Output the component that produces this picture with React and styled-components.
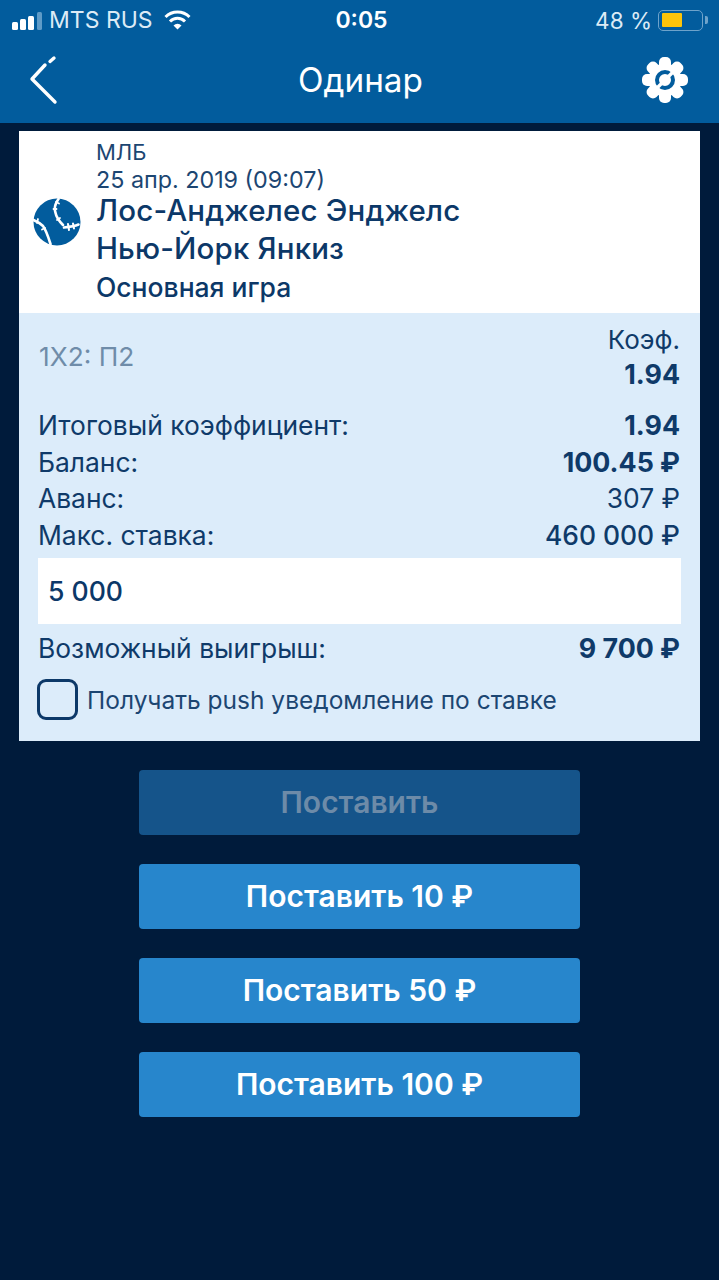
import React from 'react';
import styled, { createGlobalStyle } from 'styled-components';

const GlobalStyle = createGlobalStyle`
  html, body { margin: 0; padding: 0; background: #001b3b; }
  body { font-family: Inter, "Noto Sans", sans-serif; }
`;

const Screen = styled.div`
  width: 719px;
  height: 1280px;
  overflow: hidden;
  background: #001b3b;
`;

const Header = styled.header`
  height: 123px;
  background: #025c9d;
  color: #fff;
`;

const StatusBar = styled.div`
  height: 40px;
  display: grid;
  grid-template-columns: 1fr auto 1fr;
  align-items: center;
  padding: 0 16px 0 12px;
  font-size: 23px;
  color: #dcebf6;
`;

const StatusLeft = styled.div`
  display: flex;
  align-items: center;
  gap: 7px;
`;

const StatusRight = styled.div`
  display: flex;
  align-items: center;
  justify-content: flex-end;
  gap: 6px;
  font-size: 22.5px;
`;

const Clock = styled.div`
  font-weight: 600;
  color: #fff;
  margin-left: 8px;
`;

const Signal = styled.div`
  display: flex;
  align-items: flex-end;
  gap: 2.7px;
  height: 20px;
`;

const SignalBar = styled.span`
  width: 5.5px;
  height: ${p => p.$h}px;
  border-radius: 1.5px;
  background: ${p => (p.$off ? '#5f9bc7' : '#fff')};
`;

const WifiWrap = styled.div`
  display: flex;
  margin-left: 4px;
`;

const Battery = styled.div`
  width: 45px;
  height: 21px;
  box-sizing: border-box;
  border: 1.5px solid #6ea3cb;
  border-radius: 5px;
  padding: 2.5px;
  position: relative;
  &::after {
    content: '';
    position: absolute;
    right: -6px;
    top: 5px;
    width: 3px;
    height: 8px;
    border-radius: 0 2px 2px 0;
    background: #6ea3cb;
  }
`;

const BatteryFill = styled.div`
  width: 20px;
  height: 100%;
  background: #fcc40a;
  border-radius: 1px;
`;

const NavBar = styled.div`
  height: 83px;
  display: flex;
  align-items: center;
  justify-content: space-between;
  padding: 0 30px 3px 28px;
  box-sizing: border-box;
`;

const NavTitle = styled.h1`
  margin: 2px 0 0 4px;
  font-size: 33.3px;
  font-weight: 400;
  line-height: 1;
`;

const IconButton = styled.div`
  display: flex;
  width: 48px;
  justify-content: ${p => (p.$end ? 'flex-end' : 'flex-start')};
`;

const Card = styled.section`
  margin: 8px 19px 0;
  width: 681px;
`;

const EventBlock = styled.div`
  background: #fff;
  height: 182px;
  box-sizing: border-box;
  padding: 7px 0 0 14px;
  display: flex;
  color: #0d3a6b;
`;

const LeagueIcon = styled.div`
  width: 48px;
  margin: 60px 15px 0 0;
`;

const EventInfo = styled.div`
  display: flex;
  flex-direction: column;
`;

const Small = styled.div`
  font-size: ${p => p.$size || 22}px;
  line-height: 28px;
  color: #1c4672;
`;

const Team = styled.div`
  font-size: 29.5px;
  font-weight: 500;
  line-height: 38px;
  letter-spacing: 0.15px;
  color: #0c3868;
  margin-top: ${p => p.$offset || 0}px;
`;

const GameType = styled.div`
  font-size: 26.5px;
  font-weight: 500;
  line-height: 30px;
  margin-top: 5px;
  color: #0c3868;
`;

const BetBlock = styled.div`
  background: #dcecfa;
  height: 428px;
  box-sizing: border-box;
  padding: 9px 20px 0 19px;
  color: #0f3a69;
`;

const OddsRow = styled.div`
  display: flex;
  justify-content: space-between;
  height: 85px;
`;

const Market = styled.div`
  font-size: 26.3px;
  color: #6f8ca9;
  margin: 20px 0 0 1px;
  line-height: 30px;
`;

const Odds = styled.div`
  text-align: right;
  font-size: 26px;
  line-height: 35px;
`;

const Row = styled.div`
  display: flex;
  justify-content: space-between;
  font-size: 26.4px;
  height: 36.5px;
  line-height: 36.5px;
`;

const Strong = styled.strong`
  font-weight: 700;
  font-size: 26.8px;
`;

const Amount = styled.span`
  font-size: 26.4px;
  font-weight: ${p => p.$w || 400};
`;

const StakeInput = styled.div`
  margin: 5px -1px 6px 0;
  height: 66px;
  background: #fff;
  display: flex;
  align-items: center;
  padding-left: 10px;
  font-size: 26.6px;
  font-weight: 500;
  color: #0c3868;
`;

const PushRow = styled.div`
  display: flex;
  align-items: center;
  gap: 9px;
  margin-top: 12px;
  font-size: 24.5px;
  color: #1c4672;
`;

const PushLabel = styled.span`
  margin-top: 2px;
`;

const Checkbox = styled.div`
  width: 41px;
  height: 41px;
  box-sizing: border-box;
  margin-left: -1px;
  border: 3px solid #0c3868;
  border-radius: 9px;
`;

const Actions = styled.div`
  display: flex;
  flex-direction: column;
  align-items: center;
  gap: 29px;
  margin-top: 29px;
`;

const BetButton = styled.button`
  width: 441px;
  height: 65px;
  border: 0;
  border-radius: 4px;
  padding: 0 0 1px;
  font: 600 30px Inter, "Noto Sans", sans-serif;
  background: ${p => (p.disabled ? '#15548a' : '#2786cc')};
  color: ${p => (p.disabled ? '#6d8ba8' : '#fff')};
`;

const BackIcon = () => (
  <svg width="30" height="50" viewBox="0 0 30 50" fill="none" stroke="#fff" strokeWidth="3.4" strokeLinecap="round" strokeLinejoin="round">
    <path d="M17 10 L4 24 L27 47" />
    <path d="M22 6.5 L26 3" />
  </svg>
);

const lobes = [0, 45, 90, 135, 180, 225, 270, 315];

const GearIcon = () => (
  <svg width="48" height="48" viewBox="0 0 48 48">
    <circle cx="24" cy="24" r="16.5" fill="#fff" />
    {lobes.map(a => (
      <rect key={a} x="18" y="1" width="12" height="13" rx="5" fill="#fff" transform={`rotate(${a} 24 24)`} />
    ))}
    <circle cx="24" cy="24" r="8" fill="none" stroke="#025c9d" strokeWidth="4" />
    <path d="M15 33 L33 15" stroke="#fff" strokeWidth="3.4" />
  </svg>
);

const WifiIcon = () => (
  <svg width="27" height="20" viewBox="0 0 27 20" fill="none" stroke="#fff" strokeWidth="3">
    <path d="M1.5 7a17 17 0 0 1 24 0" />
    <path d="M6 11.5a10.500 10.500 0 0 1 15 0" />
    <path d="M13.500 19.500l-4-4a5.600 5.600 0 0 1 8 0z" fill="#fff" stroke="none" />
  </svg>
);

const BaseballIcon = () => (
  <svg width="48" height="48" viewBox="0 0 48 48">
    <circle cx="24" cy="24" r="23.5" fill="#025c9d" />
    <g fill="none" stroke="#fff" strokeWidth="2.6" strokeLinecap="round">
      <path d="M25.500 1 C22 6 21 10 22.300 14 C23 18 25 22 30 27" />
      <path d="M23 4l3 1.500 M20.500 11l3 0 M24 22l3-2" strokeWidth="1.8" />
      <path d="M0.500 22 C5 24 8 26 10 28 C13 32 15 38 17.500 46" />
      <path d="M5 21l-1 4 M12 30l-3 1.500" strokeWidth="1.8" />
      <path d="M31 29.500 C36 29 41 28.500 45.500 26.500" />
      <path d="M35 26l1 6 M40 25.500l1 5" strokeWidth="2" />
    </g>
  </svg>
);

export default function App() {
  return (
    <Screen>
      <GlobalStyle />
      <Header>
        <StatusBar>
          <StatusLeft>
            <Signal>
              <SignalBar $h={8} />
              <SignalBar $h={11} />
              <SignalBar $h={14} />
              <SignalBar $h={18} $off />
            </Signal>
            <span>MTS RUS</span>
            <WifiWrap><WifiIcon /></WifiWrap>
          </StatusLeft>
          <Clock>0:05</Clock>
          <StatusRight>
            <span>48 %</span>
            <Battery>
              <BatteryFill />
            </Battery>
          </StatusRight>
        </StatusBar>
        <NavBar>
          <IconButton><BackIcon /></IconButton>
          <NavTitle>Одинар</NavTitle>
          <IconButton $end><GearIcon /></IconButton>
        </NavBar>
      </Header>
      <Card>
        <EventBlock>
          <LeagueIcon><BaseballIcon /></LeagueIcon>
          <EventInfo>
            <Small>МЛБ</Small>
            <Small $size={23.3}>25 апр. 2019 (09:07)</Small>
            <Team $offset={-3}>Лос-Анджелес Энджелс</Team>
            <Team>Нью-Йорк Янкиз</Team>
            <GameType>Основная игра</GameType>
          </EventInfo>
        </EventBlock>
        <BetBlock>
          <OddsRow>
            <Market>1Х2: П2</Market>
            <Odds>
              <div>Коэф.</div>
              <Strong>1.94</Strong>
            </Odds>
          </OddsRow>
          <Row><span>Итоговый коэффициент:</span><Strong>1.94</Strong></Row>
          <Row><span>Баланс:</span><Strong>100.45 ₽</Strong></Row>
          <Row><span>Аванс:</span><Amount>307 ₽</Amount></Row>
          <Row><span>Макс. ставка:</span><Amount $w={500}>460 000 ₽</Amount></Row>
          <StakeInput>5 000</StakeInput>
          <Row><span>Возможный выигрыш:</span><Strong>9 700 ₽</Strong></Row>
          <PushRow>
            <Checkbox />
            <PushLabel>Получать push уведомление по ставке</PushLabel>
          </PushRow>
        </BetBlock>
      </Card>
      <Actions>
        <BetButton disabled>Поставить</BetButton>
        <BetButton>Поставить 10 ₽</BetButton>
        <BetButton>Поставить 50 ₽</BetButton>
        <BetButton>Поставить 100 ₽</BetButton>
      </Actions>
    </Screen>
  );
}
